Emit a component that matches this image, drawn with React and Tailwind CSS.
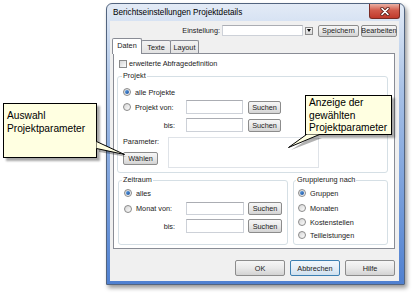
import clsx from 'clsx';

function Radio({ checked }) {
  return (
    <span className="flex h-[8px] w-[8px] shrink-0 items-center justify-center rounded-full border border-[#8a8a8a] bg-linear-to-br from-[#d6d6d6] to-[#fcfcfc]">
      {checked && <span className="h-[4px] w-[4px] rounded-full bg-linear-to-br from-[#5fa2e8] to-[#1a4f9c]" />}
    </span>
  );
}

function Btn({ children, className, focused }) {
  return (
    <div
      className={clsx(
        'flex shrink-0 items-center justify-center rounded-[2px] border bg-linear-to-b',
        focused
          ? 'border-[#3c7fb1] from-[#f1f7fc] via-[#e4eef7] to-[#cfe0ee]'
          : 'border-[#8c8c8c] from-[#f6f6f6] via-[#e9e9e9] to-[#d3d3d3]',
        className
      )}
    >
      {children}
    </div>
  );
}

function Field({ className }) {
  return <div className={clsx('shrink-0 border border-[#cdd1d8] border-t-[#abadb3] bg-white', className)} />;
}

function Option({ checked, children, className }) {
  return (
    <div className={clsx('flex h-[10px] items-center gap-[4px]', className)}>
      <Radio checked={checked} />
      <span>{children}</span>
    </div>
  );
}

export default function App() {
  return (
    <div className="relative h-[295px] w-[413px] overflow-hidden bg-white font-['Liberation_Sans',Arial,sans-serif] text-[7.3px] leading-[9px] text-[#1b1b1b]">
      {/* dialog window */}
      <div className="ml-[106px] mt-[3px] flex h-[282px] w-[299px] flex-col rounded-t-[6px] border border-[#52647f] bg-linear-to-b from-[#e3ebf6] via-[#a9c2e6] via-30% to-[#4f80d0] pb-[3px] pl-[3px] pr-[5px] shadow-[2px_3px_4px_rgba(0,0,0,0.4)]">
        <div className="flex h-[17px] items-start justify-between">
          <span className="pl-[3px] pt-[4px] text-[8.2px] leading-[10px] text-black">Berichtseinstellungen Projektdetails</span>
          <div className="-mr-[1px] flex h-[15px] w-[31px] items-center justify-center rounded-b-[3px] border border-t-0 border-[#7a2b24] bg-linear-to-b from-[#eab0a4] via-[#d15a4b] via-45% to-[#c0392b]">
            <svg width="10" height="9" viewBox="0 0 10 9">
              <path d="M2 1.5 L8 7.5 M8 1.5 L2 7.5" stroke="#5a1d17" strokeWidth="3.2" strokeLinecap="round" />
              <path d="M2 1.5 L8 7.5 M8 1.5 L2 7.5" stroke="#fff" strokeWidth="1.7" strokeLinecap="round" />
            </svg>
          </div>
        </div>

        {/* client area */}
        <div className="flex flex-1 flex-col bg-[#f0f0f0]">
          <div className="mt-[3px] flex h-[13px] items-center">
            <span className="w-[111px] pr-[1px] text-right">Einstellung:</span>
            <Field className="ml-[1px] h-[11px] w-[81px]" />
            <div className="ml-[2px] flex h-[8px] w-[8px] items-center justify-center border border-[#8c8c8c] bg-linear-to-b from-[#f6f6f6] to-[#d8d8d8]">
              <svg width="4" height="3" viewBox="0 0 4 3">
                <path d="M0 0 H4 L2 3 Z" fill="#000" />
              </svg>
            </div>
            <Btn className="ml-[5px] h-[12px] w-[41px]">Speichern</Btn>
            <Btn className="ml-[2px] h-[12px] w-[36px]">Bearbeiten</Btn>
          </div>

          {/* tabs */}
          <div className="ml-[3px] mt-[1px] w-[282px]">
            <div className="flex h-[15px] items-end">
              <div className="relative z-10 -mb-[1px] -ml-[1px] flex h-[16px] w-[30px] justify-center rounded-t-[2px] border border-b-0 border-[#898c95] bg-white pt-[2px]">
                Daten
              </div>
              <div className="-ml-[1px] flex h-[13px] w-[30px] items-center justify-center rounded-t-[2px] border border-b-0 border-[#898c95] bg-linear-to-b from-[#f3f3f3] to-[#e2e2e2]">
                Texte
              </div>
              <div className="-ml-[1px] flex h-[13px] w-[29px] items-center justify-center rounded-t-[2px] border border-b-0 border-[#898c95] bg-linear-to-b from-[#f3f3f3] to-[#e2e2e2]">
                Layout
              </div>
            </div>

            <div className="h-[196px] border border-[#898c95] bg-white">
              <div className="ml-[5px] mt-[5px] flex h-[9px] items-center gap-[2px]">
                <span className="h-[8px] w-[8px] border border-[#8a8a8a] bg-linear-to-br from-[#d6d6d6] to-[#fcfcfc]" />
                <span>erweiterte Abfragedefinition</span>
              </div>

              {/* Projekt */}
              <fieldset className="ml-[3px] mt-[3px] w-[271px] rounded-[3px] border border-[#d5dfe5] pb-[4px]">
                <legend className="ml-[4px] px-[1px] leading-[10px]">Projekt</legend>
                <div className="pl-[5px]">
                  <Option checked className="mt-[6px]">alle Projekte</Option>
                  <div className="mt-[3px] flex h-[14px] items-center">
                    <div className="flex w-[63px] items-center gap-[4px]">
                      <Radio />
                      <span>Projekt von:</span>
                    </div>
                    <Field className="h-[14px] w-[57px]" />
                    <Btn className="ml-[5px] h-[13px] w-[33px]">Suchen</Btn>
                  </div>
                  <div className="mt-[4px] flex h-[14px] items-center">
                    <span className="w-[63px] pr-[11px] text-right">bis:</span>
                    <Field className="h-[14px] w-[57px]" />
                    <Btn className="ml-[5px] h-[13px] w-[33px]">Suchen</Btn>
                  </div>
                  <div className="mt-[5px] flex">
                    <div className="flex w-[45px] flex-col">
                      <span>Parameter:</span>
                      <Btn className="mt-[6px] h-[13px] w-[35px]">Wählen</Btn>
                    </div>
                    <Field className="h-[31px] w-[151px] border-[#dfe3e8] border-t-[#dfe3e8]" />
                  </div>
                </div>
              </fieldset>

              <div className="ml-[4px] mt-[2px] flex gap-[5px]">
                {/* Zeitraum */}
                <fieldset className="w-[170px] rounded-[3px] border border-[#d5dfe5] pb-[11px]">
                  <legend className="ml-[3px] px-[1px] leading-[10px]">Zeitraum</legend>
                  <div className="pl-[5px]">
                    <Option checked className="mt-[3px]">alles</Option>
                    <div className="mt-[4px] flex h-[13px] items-center">
                      <div className="flex w-[62px] items-center gap-[4px]">
                        <Radio />
                        <span>Monat von:</span>
                      </div>
                      <Field className="h-[13px] w-[58px]" />
                      <Btn className="ml-[4px] h-[13px] w-[34px]">Suchen</Btn>
                    </div>
                    <div className="mt-[4px] flex h-[14px] items-center">
                      <span className="w-[62px] pr-[11px] text-right">bis:</span>
                      <Field className="h-[14px] w-[58px]" />
                      <Btn className="ml-[4px] h-[14px] w-[34px]">Suchen</Btn>
                    </div>
                  </div>
                </fieldset>

                {/* Gruppierung */}
                <fieldset className="w-[95px] rounded-[3px] border border-[#d5dfe5]">
                  <legend className="ml-[2px] px-[1px] leading-[10px]">Gruppierung nach</legend>
                  <div className="pl-[4px]">
                    <Option checked className="mt-[3px] gap-[3px]">Gruppen</Option>
                    <Option className="mt-[5px] gap-[3px]">Monaten</Option>
                    <Option className="mt-[4px] gap-[3px]">Kostenstellen</Option>
                    <Option className="mt-[3px] gap-[3px]">Teilleistungen</Option>
                  </div>
                </fieldset>
              </div>
            </div>
          </div>

          <div className="mt-[11px] flex justify-end gap-[5px] pr-[4px]">
            <Btn className="h-[16px] w-[50px]">OK</Btn>
            <Btn focused className="h-[16px] w-[50px]">Abbrechen</Btn>
            <Btn className="h-[16px] w-[50px]">Hilfe</Btn>
          </div>
        </div>
      </div>

      {/* callout: Auswahl */}
      <div className="absolute left-[3px] top-[103px] h-[55px] w-[94px] border border-black bg-[#ffffe1] pl-[3px] pt-[5px] text-[10.2px] leading-[13px] text-black shadow-[3px_3px_2px_rgba(0,0,0,0.35)]">
        Auswahl
        <br />
        Projektparameter
      </div>

      {/* callout: Anzeige */}
      <div className="absolute left-[305px] top-[95px] h-[40px] w-[87px] border border-black bg-[#ffffe1] pl-[3px] pt-[1px] text-[10.2px] leading-[12.5px] text-black shadow-[3px_3px_2px_rgba(0,0,0,0.35)]">
        Anzeige der
        <br />
        gewählten
        <br />
        Projektparameter
      </div>

      <svg className="pointer-events-none absolute left-0 top-0" width="413" height="295">
        <polygon points="99,146 127,157 99,152" fill="rgba(0,0,0,0.3)" />
        <polygon points="96.5,141.5 124.5,154.5 96.5,148.5" fill="#ffffe1" />
        <polyline points="96.5,141.5 124.5,154.5 96.5,148.5" fill="none" stroke="#000" strokeWidth="1" />
        <polygon points="310,138 291,150 322,138" fill="rgba(0,0,0,0.3)" />
        <polygon points="306.5,134.5 288.5,147.5 319.5,134.5" fill="#ffffe1" />
        <polyline points="306.5,134.5 288.5,147.5 319.5,134.5" fill="none" stroke="#000" strokeWidth="1" />
      </svg>
    </div>
  );
}
